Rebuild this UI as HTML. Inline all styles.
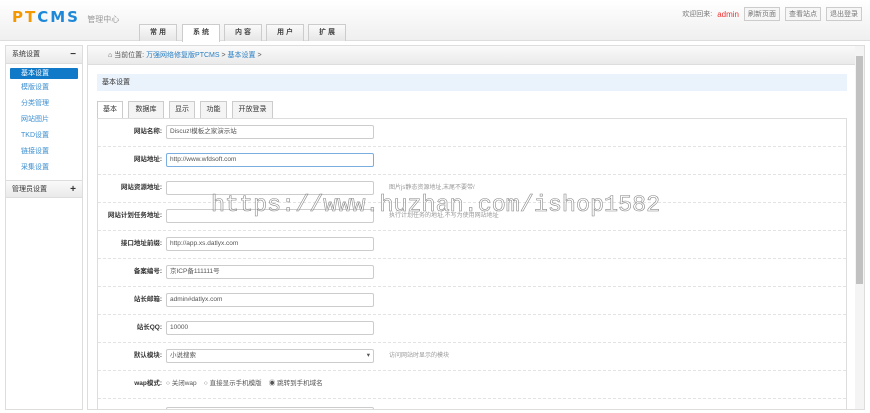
<!DOCTYPE html>
<html style="overflow:hidden;width:870px;height:413px"><head><meta charset="utf-8"><style>
*{margin:0;padding:0;box-sizing:border-box}
body{width:870px;height:413px;overflow:hidden;background:#fff;font-family:"Liberation Sans","Noto Sans CJK SC",sans-serif;font-size:7px;color:#333;position:relative}
.hdr{position:absolute;left:0;top:0;width:870px;height:41px;background:linear-gradient(#fff,#efefef);border-bottom:1px solid #ddd}
.logo{position:absolute;left:12px;top:8px;font-size:15px;font-weight:bold;color:#f39800;letter-spacing:2px;font-family:"DejaVu Sans",sans-serif}
.logo span{color:#1e88d8}
.logo small{font-size:8px;color:#999;font-weight:normal;letter-spacing:0}
.nav{position:absolute;top:24px;height:17px;width:38px;border:1px solid #ccc;border-bottom:none;background:linear-gradient(#fafafa,#e6e6e6);font-size:7px;text-align:center;line-height:16px;font-weight:bold;color:#444}
.nav.on{background:#fff;height:18px}
.tr{position:absolute;top:7px;right:8px;font-size:7px;color:#777;display:flex;gap:5px;align-items:center}
.tr b{color:#e33;font-weight:normal;font-size:8px}
.tr i{font-style:normal;border:1px solid #ccc;background:#f6f6f6;padding:1px 3px}
.side{position:absolute;left:5px;top:45px;width:78px;height:365px;border:1px solid #ddd;background:#fff}
.sh{height:18px;background:linear-gradient(#fafafa,#eaeaea);border-bottom:1px solid #ddd;font-size:7px;line-height:18px;padding-left:6px;color:#333;position:relative}
.sh em{position:absolute;right:6px;top:0;font-style:normal;font-weight:bold;font-size:10px}
.si{height:16px;line-height:11px;padding-left:15px;color:#3a8ed0;font-size:7px}
.si.on{background:#1079c8;color:#fff;margin:4px 4px 3px 4px;padding-left:11px;height:11px;border-radius:1px}
.main{position:absolute;left:87px;top:45px;width:778px;height:365px;border:1px solid #ddd;overflow:hidden}
.bc{height:19px;background:linear-gradient(#fafafa,#eaeaea);border-bottom:1px solid #ddd;line-height:19px;padding-left:20px;font-size:7px;color:#555}
.bc a{color:#2a7fc4}
.tt{position:absolute;left:9px;top:28px;width:750px;height:17px;background:#eaf2fb;line-height:17px;padding-left:5px;font-size:7px}
.tab{position:absolute;top:55px;height:17px;border:1px solid #ccc;border-bottom:none;background:#f4f4f4;line-height:16px;text-align:center;font-size:7px}
.tab.on{background:#fff;height:18px}
.panel{position:absolute;left:9px;top:72px;width:750px;height:300px;border:1px solid #ddd;overflow:hidden}
.row{position:absolute;left:0;width:748px;height:28px;border-bottom:1px dashed #e3e3e3}
.lb{position:absolute;left:0;width:64px;text-align:right;top:6px;height:14px;line-height:14px;font-size:6.5px;font-weight:bold;color:#333;white-space:nowrap}
.in{position:absolute;left:68px;top:6px;width:208px;height:14px;border:1px solid #ccc;border-radius:2px;font-size:6.5px;line-height:12px;padding-left:3px;color:#555}
.hint{position:absolute;left:291px;top:6px;line-height:14px;font-size:6px;color:#999}
.sb{position:absolute;left:855px;top:46px;width:9px;height:363px;background:#f4f4f4}
.sb div{position:absolute;left:1px;top:10px;width:7px;height:228px;background:#c1c1c1}
.wm{position:absolute;left:211px;top:193px;font-family:"Liberation Mono","DejaVu Sans Mono",monospace;font-size:23.4px;color:rgba(255,255,255,.3);-webkit-text-stroke:0.6px #888;white-space:nowrap}
</style></head><body>
<div class="hdr">
<div class="logo">PT<span>CMS</span> <small>管理中心</small></div>
<div class="nav" style="left:139px">常 用</div>
<div class="nav on" style="left:182px">系 统</div>
<div class="nav" style="left:224px">内 容</div>
<div class="nav" style="left:266px">用 户</div>
<div class="nav" style="left:308px">扩 展</div>
<div class="tr">欢迎回来: <b>admin</b> <i>刷新页面</i><i>查看站点</i><i>退出登录</i></div>
</div>
<div class="side">
<div class="sh">系统设置<em>−</em></div>
<div class="si on">基本设置</div>
<div class="si">模版设置</div>
<div class="si">分类管理</div>
<div class="si">网站图片</div>
<div class="si">TKD设置</div>
<div class="si">链接设置</div>
<div class="si">采集设置</div>
<div class="sh" style="border-top:1px solid #ddd;margin-top:2px">管理员设置<em>+</em></div>
</div>
<div class="main">
<div class="bc">⌂ 当前位置: <a>万强网络修复版PTCMS</a> &gt; <a>基本设置</a> &gt;</div>
<div class="tt">基本设置</div>
<div class="tab on" style="left:9px;width:26px">基本</div>
<div class="tab" style="left:40px;width:36px">数据库</div>
<div class="tab" style="left:81px;width:26px">显示</div>
<div class="tab" style="left:112px;width:27px">功能</div>
<div class="tab" style="left:144px;width:41px">开放登录</div>
<div class="panel">
<div class="row" style="top:0"><span class="lb">网站名称:</span><span class="in">Discuz!模板之家演示站</span></div>
<div class="row" style="top:28px"><span class="lb">网站地址:</span><span class="in" style="border-color:#7aaee0">http://www.wfdsoft.com</span></div>
<div class="row" style="top:56px"><span class="lb">网站资源地址:</span><span class="in"></span><span class="hint">图片js静态资源地址,末尾不要带/</span></div>
<div class="row" style="top:84px"><span class="lb">网站计划任务地址:</span><span class="in"></span><span class="hint">执行计划任务的地址,不写为使用网站地址</span></div>
<div class="row" style="top:112px"><span class="lb">接口地址前缀:</span><span class="in">http://app.xs.datlyx.com</span></div>
<div class="row" style="top:140px"><span class="lb">备案编号:</span><span class="in">京ICP备111111号</span></div>
<div class="row" style="top:168px"><span class="lb">站长邮箱:</span><span class="in">admin#datlyx.com</span></div>
<div class="row" style="top:196px"><span class="lb">站长QQ:</span><span class="in">10000</span></div>
<div class="row" style="top:224px"><span class="lb">默认模块:</span><span class="in">小说搜索<span style="position:absolute;right:3px">▾</span></span><span class="hint">访问网站时显示的模块</span></div>
<div class="row" style="top:252px"><span class="lb">wap模式:</span><span style="position:absolute;left:68px;top:6px;line-height:14px;font-size:6.5px;color:#555">○ 关闭wap &nbsp;&nbsp; ○ 直接显示手机模版 &nbsp;&nbsp; ◉ 跳转到手机域名</span></div>
<div class="row" style="top:280px;border:none"><span class="in" style="top:8px"></span></div>
</div>
</div>
<div class="sb"><div></div></div>
<div class="wm">https://www.huzhan.com/ishop1582</div>
</body></html>
